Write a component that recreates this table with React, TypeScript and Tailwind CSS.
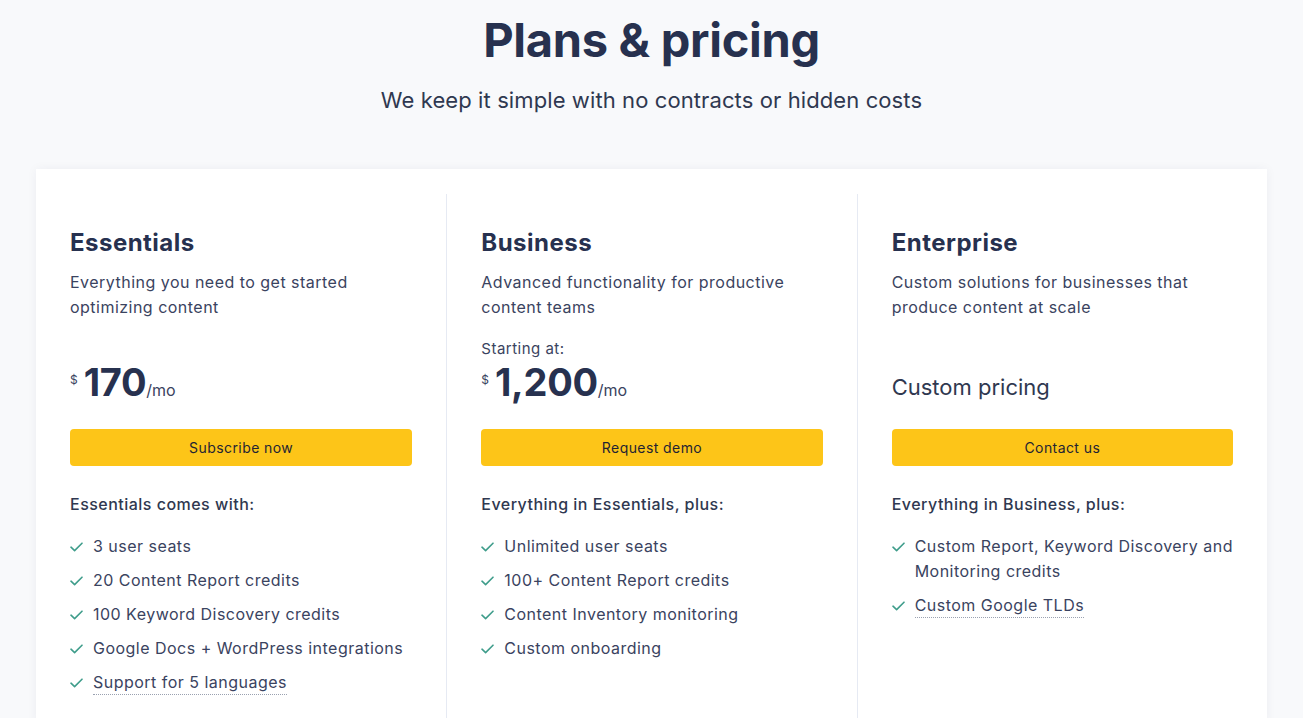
import React from 'react';

type Plan = {
  name: string;
  description: string[];
  starting?: boolean;
  price?: string;
  custom?: string;
  cta: string;
  listTitle: string;
  features: { text: string[]; dotted?: boolean }[];
};

const PLANS: Plan[] = [
  {
    name: 'Essentials',
    description: ['Everything you need to get started', 'optimizing content'],
    price: '170',
    cta: 'Subscribe now',
    listTitle: 'Essentials comes with:',
    features: [
      { text: ['3 user seats'] },
      { text: ['20 Content Report credits'] },
      { text: ['100 Keyword Discovery credits'] },
      { text: ['Google Docs + WordPress integrations'] },
      { text: ['Support for 5 languages'], dotted: true },
    ],
  },
  {
    name: 'Business',
    description: ['Advanced functionality for productive', 'content teams'],
    starting: true,
    price: '1,200',
    cta: 'Request demo',
    listTitle: 'Everything in Essentials, plus:',
    features: [
      { text: ['Unlimited user seats'] },
      { text: ['100+ Content Report credits'] },
      { text: ['Content Inventory monitoring'] },
      { text: ['Custom onboarding'] },
    ],
  },
  {
    name: 'Enterprise',
    description: ['Custom solutions for businesses that', 'produce content at scale'],
    custom: 'Custom pricing',
    cta: 'Contact us',
    listTitle: 'Everything in Business, plus:',
    features: [
      { text: ['Custom Report, Keyword Discovery and', 'Monitoring credits'] },
      { text: ['Custom Google TLDs'], dotted: true },
    ],
  },
];

const Check: React.FC = () => (
  <svg width="13" height="10" viewBox="0 0 13 10" fill="none" className="shrink-0 mt-[8px]">
    <path d="M1 5.2 L4.6 8.6 L12 1.2" stroke="#3f9d8b" strokeWidth="1.6" strokeLinecap="round" strokeLinejoin="round" />
  </svg>
);

export default function App() {
  return (
    <div className="min-h-[718px] bg-[#f8f9fb] font-['Inter',sans-serif] text-[#3a4360]">
      {/* Header */}
      <div className="pt-[11px] text-center">
        <h1 className="text-[47px] leading-[58px] font-bold text-[#27314f] tracking-[-0.3px]">Plans &amp; pricing</h1>
        <p className="mt-[16px] text-[22px] leading-[30px] text-[#2f3850] tracking-[0.1px]">We keep it simple with no contracts or hidden costs</p>
      </div>

      {/* Card */}
      <div className="mx-auto mt-[54px] w-[1231px] bg-white pt-[25px] shadow-[0_0_10px_rgba(30,40,70,0.05)]">
        <div className="grid grid-cols-3">
          {PLANS.map((plan, idx) => (
            <div key={plan.name} className={`px-[34px] pt-[34px] pb-[30px] tracking-[0.03em] ${idx > 0 ? 'border-l border-[#e6eaf3]' : ''}`}>
              <h2 className="text-[24px] leading-[30px] font-bold text-[#27314f]">{plan.name}</h2>
              <p className="mt-[12px] text-[16px] leading-[25px] text-[#3a4360]">
                {plan.description[0]}
                <br />
                {plan.description[1]}
              </p>

              <div className="h-[34px] mt-[4px] flex items-end">
                {plan.starting && <span className="text-[15px] leading-[22px] text-[#3a4360] mb-[-2px]">Starting at:</span>}
              </div>

              <div className="h-[48px] flex items-center">
                {plan.price ? (
                  <div className="whitespace-nowrap leading-none tracking-normal">
                    <span className="text-[12px] text-[#3a4360] align-[12px] mr-[6px]">$</span>
                    <span className="text-[38px] font-bold text-[#27314f] tracking-[-0.3px]">{plan.price}</span>
                    <span className="text-[16px] text-[#3a4360]">/mo</span>
                  </div>
                ) : (
                  <span className="text-[22px] leading-[30px] text-[#2f3850] mt-[9px] tracking-normal">{plan.custom}</span>
                )}
              </div>

              <button className="mt-[23px] w-full h-[37px] rounded-[4px] bg-[#fdc518] text-[14px] text-[#1f2433] tracking-[0.03em]">
                {plan.cta}
              </button>

              <h3 className="mt-[26px] text-[16px] leading-[25px] font-medium text-[#2f3850]">{plan.listTitle}</h3>

              <ul className="mt-[17px] flex flex-col gap-[9px]">
                {plan.features.map((f, fIdx) => (
                  <li key={fIdx} className="flex gap-[10px] text-[16px] leading-[25px] text-[#3a4360]">
                    <Check />
                    <span>
                      {f.dotted ? (
                        <span className="border-b border-dotted border-[#9aa1b0] pb-[2px]">{f.text[0]}</span>
                      ) : (
                        f.text.map((t, tIdx) => (
                          <React.Fragment key={tIdx}>
                            {tIdx > 0 && <br />}
                            {t}
                          </React.Fragment>
                        ))
                      )}
                    </span>
                  </li>
                ))}
              </ul>
            </div>
          ))}
        </div>
      </div>
    </div>
  );
}
